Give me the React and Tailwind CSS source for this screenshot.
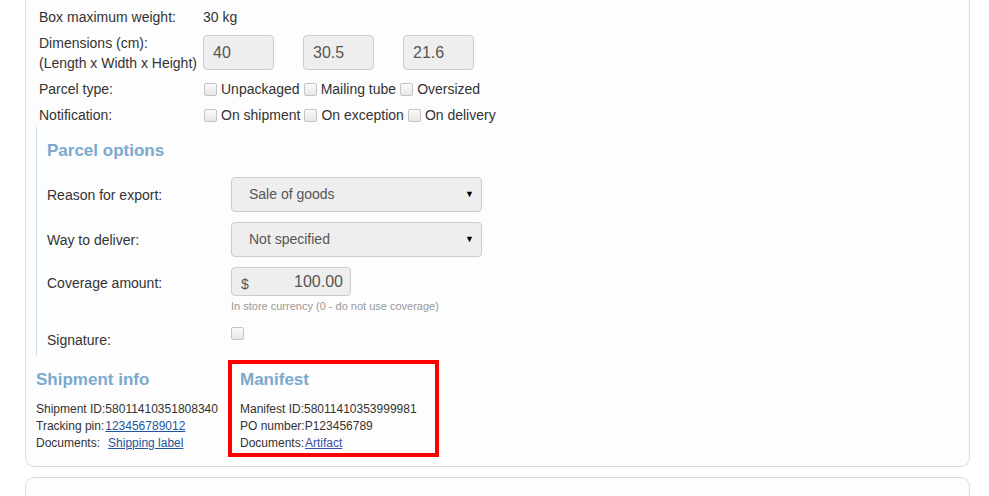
import React from "react";

const Checkbox = () => (
  <span className="inline-block w-[13px] h-[13px] shrink-0 rounded-[2px] border border-[#c4c4c4] bg-gradient-to-b from-[#fbfbfb] to-[#e6e6e6]" />
);

const CheckItem = ({ label }) => (
  <span className="flex items-center gap-[4px]">
    <Checkbox />
    <span>{label}</span>
  </span>
);

const DimInput = ({ value }) => (
  <div className="w-[71px] h-[35px] rounded-[4px] border border-[#cccccc] bg-[#eeeeee] flex items-center pl-[9px] text-[16px] text-[#555555]">
    {value}
  </div>
);

const Select = ({ value }) => (
  <div className="w-[251px] h-[35px] rounded-[4px] border border-[#cccccc] bg-[#eeeeee] flex items-center justify-between pl-[17px] pr-[7px] text-[14px] text-[#555555]">
    <span>{value}</span>
    <span className="text-[9px] text-black">▼</span>
  </div>
);

const App = () => {
  return (
    <div
      className="w-[989px] h-[496px] overflow-hidden bg-white text-[#333333]"
      style={{ fontFamily: '"Liberation Sans", Arial, sans-serif' }}
    >
      {/* main card, top edge is scrolled off */}
      <div className="ml-[25px] mt-[-10px] w-[945px] h-[477px] rounded-b-[9px] border border-t-0 border-[#cfdde8] bg-[#fdfdfd] pl-[10px] pt-[17px]">
        <div className="pl-[3px] text-[14px]">
          <div className="flex h-[20px] items-center">
            <div className="w-[164px]">Box maximum weight:</div>
            <div>30 kg</div>
          </div>

          <div className="flex mt-[6px]">
            <div className="w-[164px] leading-[20px]">
              Dimensions (cm):
              <br />
              (Length x Width x Height)
            </div>
            <div className="flex gap-[29px] pt-[2px]">
              <DimInput value="40" />
              <DimInput value="30.5" />
              <DimInput value="21.6" />
            </div>
          </div>

          <div className="flex h-[20px] items-center mt-[6px]">
            <div className="w-[165px]">Parcel type:</div>
            <div className="flex items-center gap-[4px]">
              <CheckItem label="Unpackaged" />
              <CheckItem label="Mailing tube" />
              <CheckItem label="Oversized" />
            </div>
          </div>

          <div className="flex h-[20px] items-center mt-[6px]">
            <div className="w-[165px]">Notification:</div>
            <div className="flex items-center gap-[4px]">
              <CheckItem label="On shipment" />
              <CheckItem label="On exception" />
              <CheckItem label="On delivery" />
            </div>
          </div>
        </div>

        {/* parcel options */}
        <div className="mt-[2px] border-l border-[#c9dcea] pl-[10px] h-[229px]">
          <h3 className="pt-[14px] text-[17px] font-bold leading-[20px] text-[#7aa9ce]">
            Parcel options
          </h3>

          <div className="flex items-center mt-[16px] text-[14px]">
            <div className="w-[184px] pt-[1px]">Reason for export:</div>
            <Select value="Sale of goods" />
          </div>

          <div className="flex items-center mt-[10px] text-[14px]">
            <div className="w-[184px] pt-[1px]">Way to deliver:</div>
            <Select value="Not specified" />
          </div>

          <div className="flex mt-[10px] text-[14px]">
            <div className="w-[184px] pt-[6px]">Coverage amount:</div>
            <div>
              <div className="w-[120px] h-[29px] rounded-[4px] border border-[#cccccc] bg-[#eeeeee] flex items-center justify-between pl-[9px] pr-[7px] text-[#555555]">
                <span className="text-[14px] pt-[5px]">$</span>
                <span className="text-[16px]">100.00</span>
              </div>
              <div className="mt-[3px] text-[11px] leading-[14px] text-[#999999]">
                In store currency (0 - do not use coverage)
              </div>
            </div>
          </div>

          <div className="flex mt-[10px] text-[14px]">
            <div className="w-[184px] pt-[7px]">Signature:</div>
            <div className="pt-[2px]">
              <Checkbox />
            </div>
          </div>
        </div>

        {/* shipment info + manifest */}
        <div className="flex mt-[4px] text-[12px] leading-[17px]">
          <div className="w-[192px] pt-[8px]">
            <h3 className="text-[17px] font-bold leading-[24px] text-[#7aa9ce]">
              Shipment info
            </h3>
            <div className="mt-[9px]">Shipment ID:58011410351808340</div>
            <div>
              Tracking pin:
              <a href="#" className="ml-[1px] text-[#23559f] underline">
                123456789012
              </a>
            </div>
            <div>
              Documents:
              <a href="#" className="ml-[8px] text-[#23559f] underline">
                Shipping label
              </a>
            </div>
          </div>

          <div className="w-[211px] h-[97px] border-[4px] border-[#ff0000] pl-[8px] pt-[4px]">
            <h3 className="text-[17px] font-bold leading-[24px] text-[#7aa9ce]">
              Manifest
            </h3>
            <div className="mt-[9px]">Manifest ID:58011410353999981</div>
            <div>PO number:P123456789</div>
            <div>
              Documents:
              <a href="#" className="ml-[1px] text-[#3a4ea6] underline">
                Artifact
              </a>
            </div>
          </div>
        </div>
      </div>

      {/* next card */}
      <div className="ml-[25px] mt-[10px] w-[945px] h-[40px] rounded-t-[9px] border border-b-0 border-[#cfdde8] bg-[#fdfdfd]" />
    </div>
  );
};

export default App;
